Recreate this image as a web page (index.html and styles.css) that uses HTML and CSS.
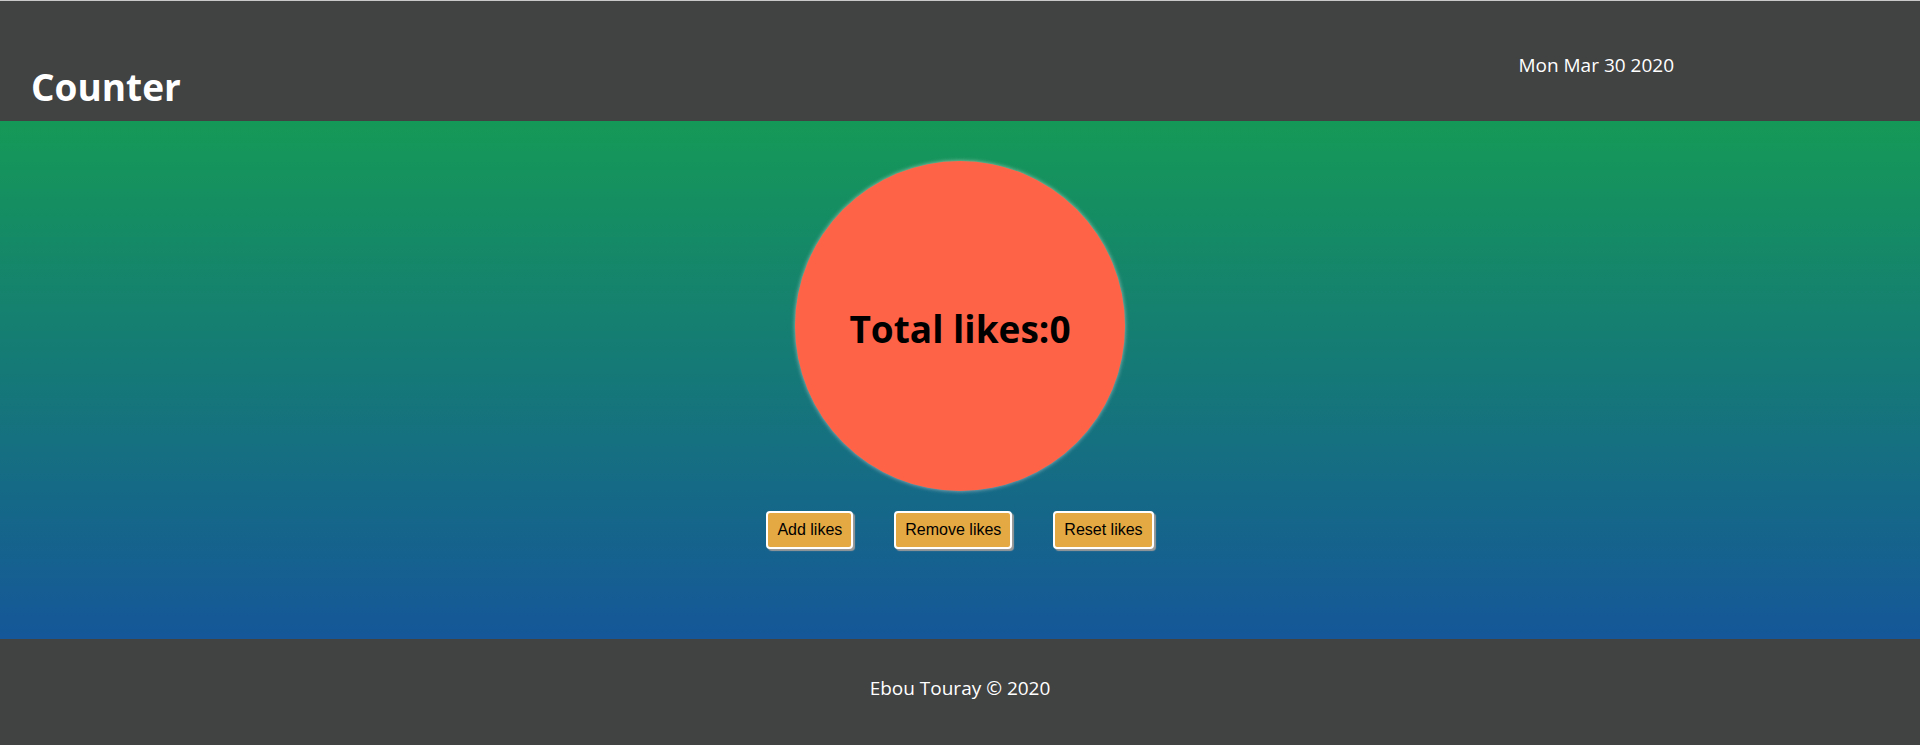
FILE: index.html
```html
<!DOCTYPE html>
<html lang="en">
<head>
<meta charset="utf-8">
<title>Counter</title>
<link rel="stylesheet" href="styles.css">
</head>
<body>
  <header class="site-header">
    <h1 class="brand">Counter</h1>
    <div class="date">Mon Mar 30 2020</div>
  </header>
  <main class="stage">
    <div class="likes-circle">
      <h2 class="likes-text">Total likes:0</h2>
    </div>
    <div class="controls">
      <button class="btn">Add likes</button>
      <button class="btn">Remove likes</button>
      <button class="btn">Reset likes</button>
    </div>
  </main>
  <footer class="site-footer">
    <p class="credit">Ebou Touray © 2020</p>
  </footer>
</body>
</html>
```

FILE: styles.css
```css
* { box-sizing: border-box; }

html, body {
  margin: 0;
  padding: 0;
  height: 100%;
}

body {
  font-family: "Open Sans", "Noto Sans", sans-serif;
  background: #414242;
  color: #fff;
  display: flex;
  flex-direction: column;
  overflow: hidden;
}

.site-header {
  height: 121px;
  border-top: 1px solid #c9c9c9;
  background: #414242;
  display: flex;
  align-items: flex-start;
  padding-left: 31px;
}

.brand {
  margin: 62px 0 0 0;
  font-size: 37px;
  line-height: 48px;
  font-weight: 700;
  color: #fff;
}

.date {
  margin: 51px 246px 0 auto;
  font-size: 19px;
  line-height: 26px;
  color: #fff;
}

.stage {
  height: 518px;
  background: linear-gradient(#159957, #155799);
  display: flex;
  flex-direction: column;
  align-items: center;
  padding-top: 40px;
}

.likes-circle {
  width: 330px;
  height: 330px;
  border-radius: 50%;
  background: #ff6347;
  box-shadow: 0 0 4px rgba(220, 220, 220, 0.7);
  display: flex;
  align-items: center;
  justify-content: center;
}

.likes-text {
  margin: 4px 0 0 0;
  font-size: 37px;
  font-weight: 700;
  color: #000;
}

.controls {
  margin-top: 20px;
  display: flex;
  gap: 41px;
}

.btn {
  font-family: "Liberation Sans", Arial, sans-serif;
  font-size: 16px;
  color: #000;
  background: #e5a943;
  border: 2px solid #fff;
  border-radius: 4px;
  box-shadow: 2px 2px 1px #9a9a9a;
  height: 38px;
  padding: 0 9px;
}

.site-footer {
  flex: 1;
  background: #414242;
  display: flex;
  align-items: center;
  justify-content: center;
}

.credit {
  margin: 0 0 8px 0;
  font-size: 19px;
  color: #fff;
}
```
